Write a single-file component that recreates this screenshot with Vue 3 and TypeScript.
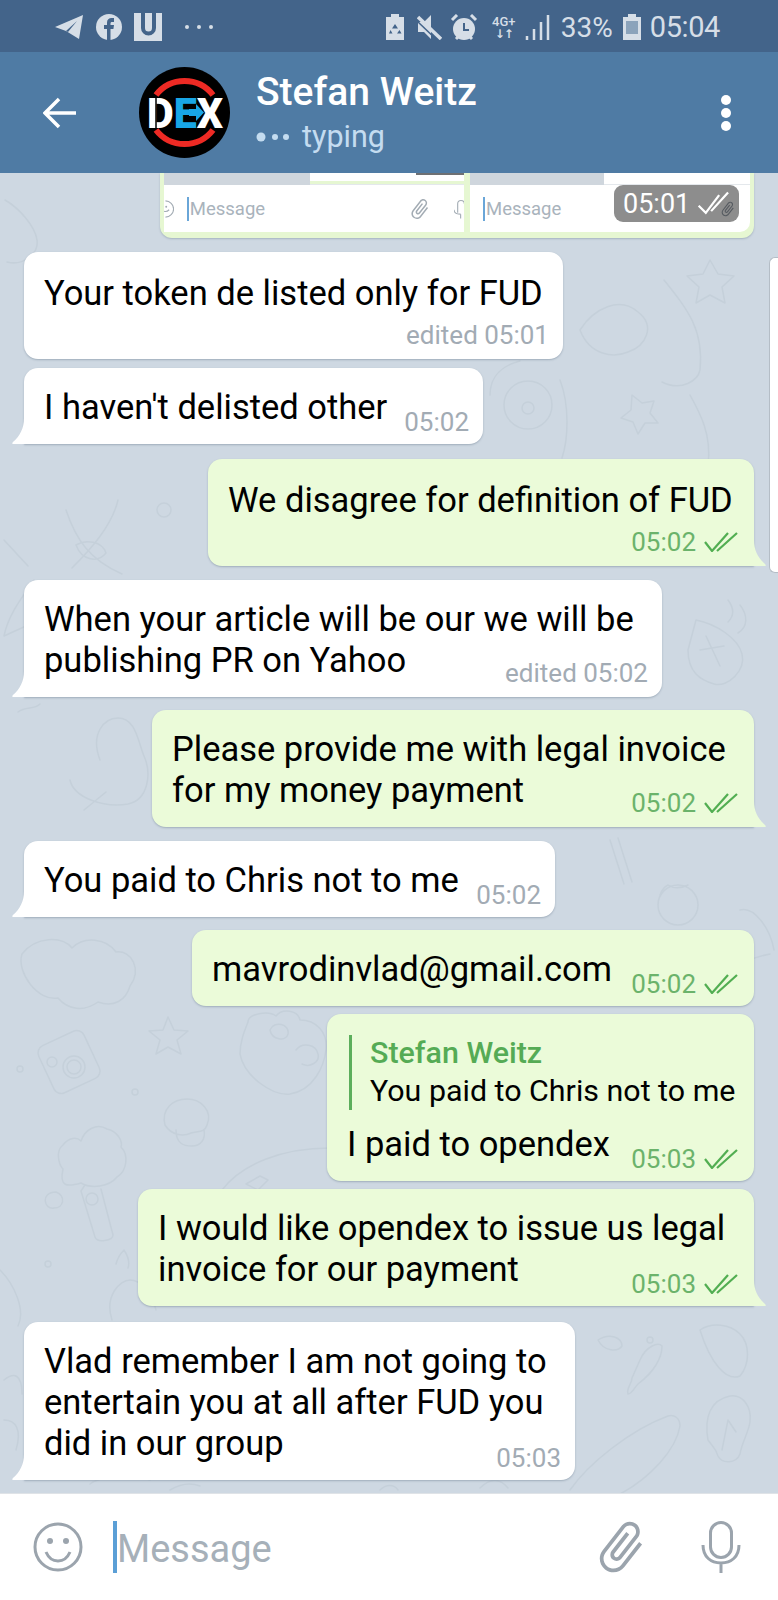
<template>
  <div class="phone">
    <div class="status-bar">
      <svg class="st-icon" width="28" height="24" viewBox="0 0 28 24">
        <path d="M28 0 0 12l11 4 13 8z" fill="#d6dee7" />
        <path d="M11 16 22 6 13 17z" fill="#43648a" />
      </svg>
      <svg class="st-icon fb" width="26" height="26" viewBox="0 0 26 26">
        <circle cx="13" cy="13" r="13" fill="#d6dee7" />
        <path d="M11 26V15H8v-4h3V8.500C11 5.500 13 4 15.500 4H18v4h-2c-1 0-1.500.500-1.500 1.500V11H18l-.6 4h-2.900v11z" fill="#43648a" />
      </svg>
      <svg class="st-icon u" width="28" height="28" viewBox="0 0 28 28">
        <rect width="28" height="28" fill="#d6dee7" />
        <path d="M9 0v15a5.500 5.500 0 0 0 11 0V0" fill="none" stroke="#43648a" stroke-width="4" />
      </svg>
      <svg class="st-icon more" width="28" height="6" viewBox="0 0 28 6">
        <circle cx="2" cy="3" r="2" fill="#d6dee7" />
        <circle cx="14" cy="3" r="2" fill="#d6dee7" />
        <circle cx="26" cy="3" r="2" fill="#d6dee7" />
      </svg>

      <div class="st-right">
        <svg width="18" height="26" viewBox="0 0 18 26">
          <path d="M5 0h8v3h5v23H0V3h5z" fill="#d6dee7" />
          <path d="M9 10l3 4.500H6zM4.500 16l2 3.500H3zM13.500 16l2 3.500H11z" fill="#43648a" />
        </svg>
        <svg class="mute" width="25" height="26" viewBox="0 0 25 26">
          <path d="M14 1v24l-7-7H1V8h6z" fill="#d6dee7" />
          <path d="M1 3 24 25" stroke="#d6dee7" stroke-width="3.500" />
          <path d="M-1 6 22 28" stroke="#43648a" stroke-width="1.500" />
        </svg>
        <svg class="alarm" width="28" height="27" viewBox="0 0 28 27">
          <circle cx="14" cy="15" r="11" fill="#d6dee7" />
          <path d="M14 9v7h5" fill="none" stroke="#43648a" stroke-width="2" />
          <path d="M2 6 7 1M26 6l-5-5M6 25l3-3M22 25l-3-3" stroke="#d6dee7" stroke-width="3" />
        </svg>
        <div class="net">
          <span class="net-label">4G+</span>
          <span class="net-arrows">↓↑</span>
        </div>
        <svg class="signal" width="26" height="25" viewBox="0 0 26 25">
          <path d="M2 25v-4M9 25V14M16 25V7M23 25V0" stroke="#d6dee7" stroke-width="2.500" />
        </svg>
        <span class="percent">33%</span>
        <svg class="battery" width="18" height="26" viewBox="0 0 18 26">
          <path d="M5 0h8v3h5v23H0V3h5z" fill="#d6dee7" />
          <rect x="3" y="7" width="12" height="13" fill="#8ba3bb" />
        </svg>
        <span class="clock">05:04</span>
      </div>
    </div>

    <header class="top-bar">
      <svg class="back" width="34" height="32" viewBox="0 0 34 32">
        <path d="M33 16H3M16 2 2 16l14 14" fill="none" stroke="#fff" stroke-width="3.500" />
      </svg>
      <svg class="avatar" width="91" height="91" viewBox="0 0 91 91">
        <circle cx="45.500" cy="45.500" r="45.500" fill="#000" />
        <path d="M17 28A36 36 0 0 1 74 28M17 63A36 36 0 0 0 74 63" fill="none" stroke="#ee2a24" stroke-width="6" />
        <text x="8" y="61" class="logo-letter" textLength="76" lengthAdjust="spacingAndGlyphs"><tspan fill="#fff">D</tspan><tspan fill="#18a6e6">E</tspan><tspan fill="#fff">X</tspan></text>
        <path d="M17 31v30" stroke="#000" stroke-width="1.500" />
        <path d="M50 42h7v-5l8 8.500-8 8.500v-5h-7z" fill="#18a6e6" />
      </svg>
      <div class="peer">
        <div class="peer-name">Stefan Weitz</div>
        <div class="peer-status">
          <svg width="34" height="10" viewBox="0 0 34 10">
            <circle cx="5" cy="5" r="4.500" fill="#c4dcf0" />
            <circle cx="19" cy="5" r="3" fill="#c4dcf0" />
            <circle cx="30" cy="5" r="3" fill="#c4dcf0" />
          </svg>
          <span>typing</span>
        </div>
      </div>
      <svg class="kebab" width="10" height="36" viewBox="0 0 10 36">
        <circle cx="5" cy="5" r="5" fill="#fff" />
        <circle cx="5" cy="18" r="5" fill="#fff" />
        <circle cx="5" cy="31" r="5" fill="#fff" />
      </svg>
    </header>

    <main class="chat">
      <!-- faint doodle wallpaper, coordinates are page pixels -->
      <svg class="wallpaper" width="778" height="1320" viewBox="0 173 778 1320">
        <g fill="none" stroke="#c5d0da" stroke-width="1.500" stroke-linecap="round" stroke-linejoin="round">
          <path d="M5 200c14 8 30 26 32 40s-14 26-30 22" />
          <path d="M640 262l8 14 16 2-12 11 3 16-15-8-14 8 3-16-12-11 16-2z" transform="translate(70 -2)" />
          <path d="M580 330c14-22 40-34 58-18 18 14 8 34-10 40-14 6-38 4-48-22z" />
          <path d="M664 280c24 30 40 50 36 90-2 10-18 22-38 12" />
          <circle cx="528" cy="405" r="24" />
          <circle cx="528" cy="408" r="6" />
          <path d="M490 395c0-20 14-30 30-34M560 380c10 26 8 60 2 78" />
          <path d="M632 395l10 8 12-2-4 12 8 10-13 0-7 11-5-12-12-4 10-8z" />
          <path d="M690 395c10 18 22 40 18 70" />
          <path d="M34 580c-14 20-26 36-30 56l22-10 10-22zM4 540l24 26" />
          <path d="M66 510c10 30 24 50 56 64M118 500c-6 26-28 50-46 68M76 545c10-6 26-4 30 8-8 10-24 8-30-8z" />
          <circle cx="164" cy="510" r="7" />
          <circle cx="198" cy="592" r="6" />
          <path d="M100 760c-10-26 4-42 18-42 18 0 20 24 26 38 8 18 4 44-16 48-24 4-54-6-58-24M84 810l22-18" />
          <path d="M40 704c-6 6-14 2-22 8" />
          <path d="M696 620c20 4 42 18 46 34s-14 34-28 30-26-12-26-34zM700 650l24-4M706 636l14 30" />
          <path d="M740 605c8 10 8 22-2 28M728 600c6 8 6 16 0 22" />
          <path d="M660 760l6 12 14 2-10 10 2 14-12-6-12 6 2-14-10-10 14-2z" />
          <circle cx="678" cy="905" r="20" />
          <path d="M668 885c6 4 12 4 20 0M660 895c2-6 4-8 8-10" />
          <path d="M22 954c14-18 40-18 50-6 12-12 34-10 44 4 16-2 26 18 14 34-4 14-16 22-32 16-14 10-30 8-40-4-20 4-42-26-36-44z" />
          <path d="M610 840l14 44M618 838l14 44" />
          <path d="M740 910c14-4 30 18 34 40M700 1000c20-26 40-40 70-46" />
          <rect x="44" y="1036" width="50" height="52" rx="8" transform="rotate(-25 69 1062)" />
          <circle cx="74" cy="1067" r="11" />
          <circle cx="74" cy="1067" r="7" />
          <circle cx="52" cy="1062" r="5" />
          <path d="M168 1017l6 13 14 1-11 9 4 14-13-7-12 7 4-14-11-9 14-1z" />
          <circle cx="20" cy="1069" r="3" />
          <circle cx="135" cy="1092" r="3" />
          <path d="M165 1125c-4-16 8-26 22-26s26 12 20 26c-2 8-10 6-16 8-8 4-20 2-26-8zM176 1130c0 14 8 16 16 16s14-6 12-16" />
          <path d="M63 1145c6-8 14-8 18-4 4-12 16-18 26-12 10 2 16 12 14 18 8 8 6 24-4 30-8 10-26 12-36 6-14 4-22 4-18-14-4-4-8-18 0-24zM85 1185l-4 6 14 46c2 6 18 4 18-2l-12-46M56 1192c-16 0-12 18-2 16 10 0 12-12 2-16z" />
          <circle cx="92" cy="1199" r="6" />
          <path d="M248 1022c0-8 20-12 28-6 6-8 22-6 24 4 16 0 28 12 26 30-2 16-12 40-36 44-18 2-46-18-50-40 0-12 4-22 8-32zM270 1030c4-10 20-6 18 4-2 8-16 6-18-4zM296 1050c6-8 20-6 22 4 2 8-8 14-16 10" />
          <path d="M222 1190c20-26 60-42 108-42M246 1184l14-8 8 4-10 10z" />
          <path d="M116 1264c2-8 6-12 8-14 4 6 6 12 4 18M112 1320c-8-24 8-40 18-40s22 12 26 30M0 1270c14 14 26 40 18 56" />
          <circle cx="48" cy="1264" r="3" />
          <path d="M640 1360c6-14 18-18 22-14 0 12-8 26-24 38-4 4-6 10-10 10-2-6 4-10 4-16z" />
          <path d="M700 1330c12-8 30-6 40 4s10 30 0 42c-14 6-30-14-40-46z" />
          <path d="M708 1440c-4-22 2-40 22-44 12-2 22 10 20 26-2 12-8 20-10 32-4 10-18 10-22 2-2-8-6-10-10-16zM722 1450l6-30 8 12" />
          <circle cx="650" cy="1340" r="3" />
          <path d="M570 1490c18-26 60-60 98-74 6-2 12 2 12 10-4 24-30 52-60 68" />
          <path d="M598 1340c12-8 24-2 24 6-4 6-18 6-24-6z" />
          <path d="M4 1380c10-8 18-6 18 14M4 1420c12 0 18 10 12 30" />
          <path d="M90 1484c10-8 40-10 60-4M170 1490c10-6 20-8 30-4M380 1490c6-6 14-6 18 0M480 1488c10-10 20-10 28 0" />
        </g>
      </svg>

      <div class="sent-shots">
        <div class="shot shot-left">
          <div class="shot-strip">
            <span class="shot-gray"></span>
            <span class="shot-bubble"></span>
          </div>
          <div class="shot-input">
            <svg class="shot-smile" width="14" height="24" viewBox="0 0 14 24">
              <path d="M2 1a11 11 0 0 1 0 22" fill="none" stroke="#a3acb4" stroke-width="1.500" />
              <circle cx="3" cy="9" r="1.300" fill="#a3acb4" />
              <path d="M0 15c3 1 5 0 7-2" fill="none" stroke="#a3acb4" stroke-width="1.500" />
            </svg>
            <span class="shot-caret"></span>
            <span class="shot-hint">Message</span>
            <svg class="shot-clip" width="32" height="32" viewBox="0 0 24 24">
              <path :d="clipPath" fill="#a3acb4" transform="rotate(38 12 12)" />
            </svg>
            <svg class="shot-mic" width="14" height="26" viewBox="0 0 14 26">
              <path d="M5 18V6a4 4 0 0 1 9 0M0 14c0 4 3 6 9 6M9 20v6" fill="none" stroke="#a3acb4" stroke-width="1.500" />
            </svg>
          </div>
        </div>
        <div class="shot shot-right">
          <div class="shot-strip">
            <span class="shot-gray short"></span>
          </div>
          <div class="shot-input">
            <span class="shot-caret"></span>
            <span class="shot-hint">Message</span>
          </div>
        </div>
        <div class="shot-time">
          <span>05:01</span>
          <svg width="48" height="32" viewBox="0 0 48 32">
            <path :d="clipPath" fill="#555a60" transform="translate(26 12) scale(.8) rotate(38 12 12)" />
            <path d="M3 18l8 8L26 6M17 24 36 3" fill="none" stroke="#fff" stroke-width="2.500" />
          </svg>
        </div>
      </div>

      <div
        v-for="(msg, i) in messages"
        :key="i"
        class="bubble"
        :class="[msg.out ? 'out' : 'in', { tail: msg.tail, stacked: msg.stacked, raised: msg.raised }]"
        :style="{ width: msg.width + 'px', marginTop: msg.gap + 'px' }"
      >
        <div class="body">
          <div v-if="msg.reply" class="reply">
            <div class="reply-name">{{ msg.reply.name }}</div>
            <div class="reply-text">{{ msg.reply.text }}</div>
          </div>
          <div v-for="line in msg.lines" :key="line" class="line">{{ line }}</div>
        </div>
        <div class="time">
          <span>{{ msg.time }}</span>
          <svg v-if="msg.out" width="34" height="20" viewBox="0 0 34 20">
            <path d="M1 10l7 9L24 1M13 19 33 1" fill="none" stroke="#52ae52" stroke-width="2.200" />
          </svg>
        </div>
      </div>

      <div class="scroll-thumb"></div>
    </main>

    <footer class="composer">
      <svg class="smile" width="50" height="50" viewBox="0 0 50 50">
        <circle cx="25" cy="25" r="23" fill="none" stroke="#9ba4ad" stroke-width="3" />
        <circle cx="17" cy="19" r="3" fill="#9ba4ad" />
        <circle cx="33" cy="19" r="3" fill="#9ba4ad" />
        <path d="M13 30c3 7 8 9 12 9s9-2 12-9" fill="none" stroke="#9ba4ad" stroke-width="3" />
      </svg>
      <span class="caret"></span>
      <span class="hint">Message</span>
      <svg class="clip" width="60" height="60" viewBox="0 0 24 24">
        <path :d="clipPath" fill="#9ba4ad" transform="rotate(38 12 12)" />
      </svg>
      <svg class="mic" width="40" height="52" viewBox="0 0 40 52">
        <rect x="9.500" y="1.500" width="21" height="35" rx="10.500" fill="none" stroke="#9ba4ad" stroke-width="3" />
        <path d="M2 24c0 12 8 18 18 18s18-6 18-18M20 42v10" fill="none" stroke="#9ba4ad" stroke-width="3" />
      </svg>
    </footer>
  </div>
</template>

<script setup lang="ts">
interface Message {
  out?: boolean;
  tail?: boolean;
  stacked?: boolean;
  raised?: boolean;
  width: number;
  gap: number;
  lines: string[];
  time: string;
  reply?: { name: string; text: string };
}

const clipPath =
  'M16.5 6v11.5c0 2.21-1.79 4-4 4s-4-1.79-4-4V5c0-1.38 1.12-2.5 2.5-2.5s2.5 1.12 2.5 2.5v10.5c0 .55-.45 1-1 1s-1-.45-1-1V6H10v9.5c0 1.38 1.12 2.5 2.5 2.5s2.5-1.12 2.5-2.5V5c0-2.21-1.79-4-4-4S7 2.79 7 5v12.5c0 3.04 2.46 5.5 5.5 5.5s5.5-2.46 5.5-5.5V6h-1.5z';

const messages: Message[] = [
  { width: 539, gap: 14, stacked: true, lines: ['Your token de listed only for FUD'], time: 'edited 05:01' },
  { width: 459, gap: 9, tail: true, lines: ["I haven't delisted other"], time: '05:02' },
  { out: true, tail: true, width: 546, gap: 15, stacked: true, lines: ['We disagree for definition of FUD'], time: '05:02' },
  { tail: true, raised: true, width: 638, gap: 14, lines: ['When your article will be our we will be', 'publishing PR on Yahoo'], time: 'edited 05:02' },
  { out: true, tail: true, raised: true, width: 602, gap: 13, lines: ['Please provide me with legal invoice', 'for my money payment'], time: '05:02' },
  { tail: true, width: 531, gap: 14, lines: ['You paid to Chris not to me'], time: '05:02' },
  { out: true, width: 562, gap: 13, lines: ['mavrodinvlad@gmail.com'], time: '05:02' },
  {
    out: true,
    width: 427,
    gap: 8,
    lines: ['I paid to opendex'],
    time: '05:03',
    reply: { name: 'Stefan Weitz', text: 'You paid to Chris not to me' },
  },
  { out: true, tail: true, width: 616, gap: 8, lines: ['I would like opendex to issue us legal', 'invoice for our payment'], time: '05:03' },
  { tail: true, width: 551, gap: 16, lines: ['Vlad remember I am not going to', 'entertain you at all after FUD you', 'did in our group'], time: '05:03' },
];
</script>

<style>
html,
body {
  margin: 0;
  background: #fff;
}
</style>

<style scoped>
.phone {
  width: 778px;
  height: 1600px;
  overflow: hidden;
  display: flex;
  flex-direction: column;
  font-family: Roboto, 'Liberation Sans', sans-serif;
  background: #fff;
}

.status-bar {
  height: 52px;
  flex: none;
  box-sizing: border-box;
  display: flex;
  align-items: center;
  padding: 2px 58px 0 55px;
  background: #43648a;
  color: #d6dee7;
}

.st-icon.fb {
  margin-left: 13px;
}

.st-icon.u {
  margin-left: 12px;
}

.st-icon.more {
  margin-left: 23px;
}

.st-right {
  margin-left: auto;
  display: flex;
  align-items: center;
}

.mute {
  margin-left: 13px;
}

.alarm {
  margin-left: 8px;
}

.net {
  margin-left: 12px;
  width: 28px;
  display: flex;
  flex-direction: column;
  align-items: center;
  line-height: 1;
}

.net-label {
  font-size: 13px;
  font-weight: 500;
}

.net-arrows {
  font-size: 12px;
  font-weight: 700;
  font-family: 'DejaVu Sans', sans-serif;
  letter-spacing: -1px;
}

.signal {
  margin-left: 7px;
}

.percent {
  margin-left: 10px;
  font-size: 28px;
}

.battery {
  margin-left: 10px;
}

.clock {
  margin-left: 9px;
  font-size: 29px;
  letter-spacing: -0.4px;
}

.top-bar {
  height: 121px;
  flex: none;
  display: flex;
  align-items: center;
  padding-left: 43px;
  background: #4f7ba4;
  position: relative;
  z-index: 2;
}

.avatar {
  margin-left: 62px;
}

.logo-letter {
  font-size: 42px;
  font-weight: 900;
  font-family: Roboto, sans-serif;
}

.peer {
  margin-left: 26px;
}

.peer-name {
  color: #fff;
  font-size: 39px;
  font-weight: 500;
  line-height: 42px;
}

.peer-status {
  margin-top: 6px;
  display: flex;
  align-items: center;
  gap: 12px;
  color: #c4dcf0;
  font-size: 30.500px;
  line-height: 36px;
}

.kebab {
  margin-left: auto;
  margin-right: 47px;
}

.chat {
  position: relative;
  flex: none;
  height: 1320px;
  overflow: hidden;
  display: flex;
  flex-direction: column;
  background: #ced8e2;
}

.wallpaper {
  position: absolute;
  top: 0;
  left: 0;
}

.sent-shots {
  position: relative;
  flex: none;
  align-self: flex-end;
  margin-right: 24px;
  width: 594px;
  height: 65px;
  box-sizing: border-box;
  display: flex;
  gap: 6px;
  padding: 0 4px 6px;
  background: #e6f7d2;
  border-radius: 0 0 12px 12px;
  box-shadow: 0 1px 2px rgba(90, 110, 130, 0.35);
}

.shot {
  display: flex;
  flex-direction: column;
  background: #fff;
}

.shot-left {
  width: 300px;
}

.shot-right {
  flex: 1;
  border-radius: 0 0 10px 0;
}

.shot-strip {
  height: 12px;
  flex: none;
  display: flex;
  align-items: flex-start;
  border-bottom: 1px solid #e4e8ec;
  box-sizing: border-box;
}

.shot-gray {
  width: 146px;
  height: 12px;
  background: #cfd6dd;
}

.shot-gray.short {
  width: 134px;
}

.shot-bubble {
  flex: 1;
  height: 8px;
  background: linear-gradient(90deg, transparent 69%, #6e7073 69%) top / 100% 2px no-repeat, #fff;
  box-shadow: 0 3px 0 #e6f7d2;
}

.shot-input {
  position: relative;
  flex: 1;
  display: flex;
  align-items: center;
  overflow: hidden;
}

.shot-caret {
  margin-left: 13px;
  width: 2px;
  height: 24px;
  background: #6aa6d8;
}

.shot-hint {
  margin-left: 1px;
  font-size: 18.500px;
  color: #a9b3bc;
}

.shot-clip {
  margin-left: 143px;
}

.shot-mic {
  margin-left: 22px;
}

.shot-time {
  position: absolute;
  right: 15px;
  top: 12px;
  width: 125px;
  height: 37px;
  box-sizing: border-box;
  padding-left: 9px;
  display: flex;
  align-items: center;
  gap: 6px;
  border-radius: 9px;
  background: #8d8d8d;
  color: #fff;
  font-size: 27px;
}

.bubble {
  position: relative;
  flex: none;
  display: grid;
  box-sizing: border-box;
  padding: 19px 14px 16px 20px;
  border-radius: 14px;
  box-shadow: 0 1px 2px rgba(90, 110, 130, 0.4);
  color: #000;
}

.bubble.in {
  align-self: flex-start;
  margin-left: 24px;
  background: #fff;
}

.bubble.out {
  align-self: flex-end;
  margin-right: 24px;
  background: #ebfbd9;
}

.bubble.stacked {
  padding-top: 21px;
  padding-bottom: 45px;
}

.bubble.tail.in {
  border-bottom-left-radius: 0;
}

.bubble.tail.out {
  border-bottom-right-radius: 0;
}

/* little tail at the bottom corner of the last bubble in a group */
.bubble.tail::after {
  content: '';
  position: absolute;
  bottom: 0;
  width: 13px;
  height: 26px;
  background: inherit;
}

.bubble.tail.in::after {
  left: -12px;
  clip-path: path('M12 0V26H1C0 26 0 25 1 24C8 18 12 10 12 0Z');
}

.bubble.tail.out::after {
  right: -12px;
  clip-path: path('M1 0V26H12C13 26 13 25 12 24C5 18 1 10 1 0Z');
}

.body,
.time {
  grid-area: 1 / 1;
}

.line {
  font-size: 34.500px;
  line-height: 41px;
  white-space: nowrap;
}

.reply {
  margin: 2px 0 14px 2px;
  padding-left: 18px;
  border-left: 3.500px solid #5cae5c;
}

.reply-name {
  font-size: 30.400px;
  font-weight: 500;
  line-height: 36px;
  color: #55ab55;
}

.reply-text {
  font-size: 30.400px;
  line-height: 39px;
  white-space: nowrap;
}

.time {
  place-self: end;
  margin-bottom: -9px;
  display: flex;
  align-items: center;
  gap: 8px;
  font-size: 26px;
  line-height: 30px;
  color: #a2abb4;
}

.bubble.raised .time {
  margin-bottom: -7px;
}

.bubble.stacked .time {
  margin-bottom: -36px;
}

.bubble.out .time {
  color: #6bb36b;
  margin-right: 2px;
}

.scroll-thumb {
  position: absolute;
  right: 0;
  top: 84px;
  width: 9px;
  height: 316px;
  box-sizing: border-box;
  background: #fff;
  border: 1px solid #b4bdc6;
  border-right: 0;
  border-radius: 6px 0 0 6px;
}

.composer {
  flex: 1;
  display: flex;
  align-items: center;
  background: #fff;
  padding-left: 33px;
  border-top: 1px solid #dfe3e7;
}

.caret {
  margin-left: 30px;
  width: 4px;
  height: 52px;
  background: #5b9fd6;
}

.hint {
  font-size: 38px;
  color: #a6b0b9;
  padding-top: 4px;
}

.clip {
  margin-left: auto;
}

.mic {
  margin-left: 50px;
  margin-right: 37px;
}
</style>
